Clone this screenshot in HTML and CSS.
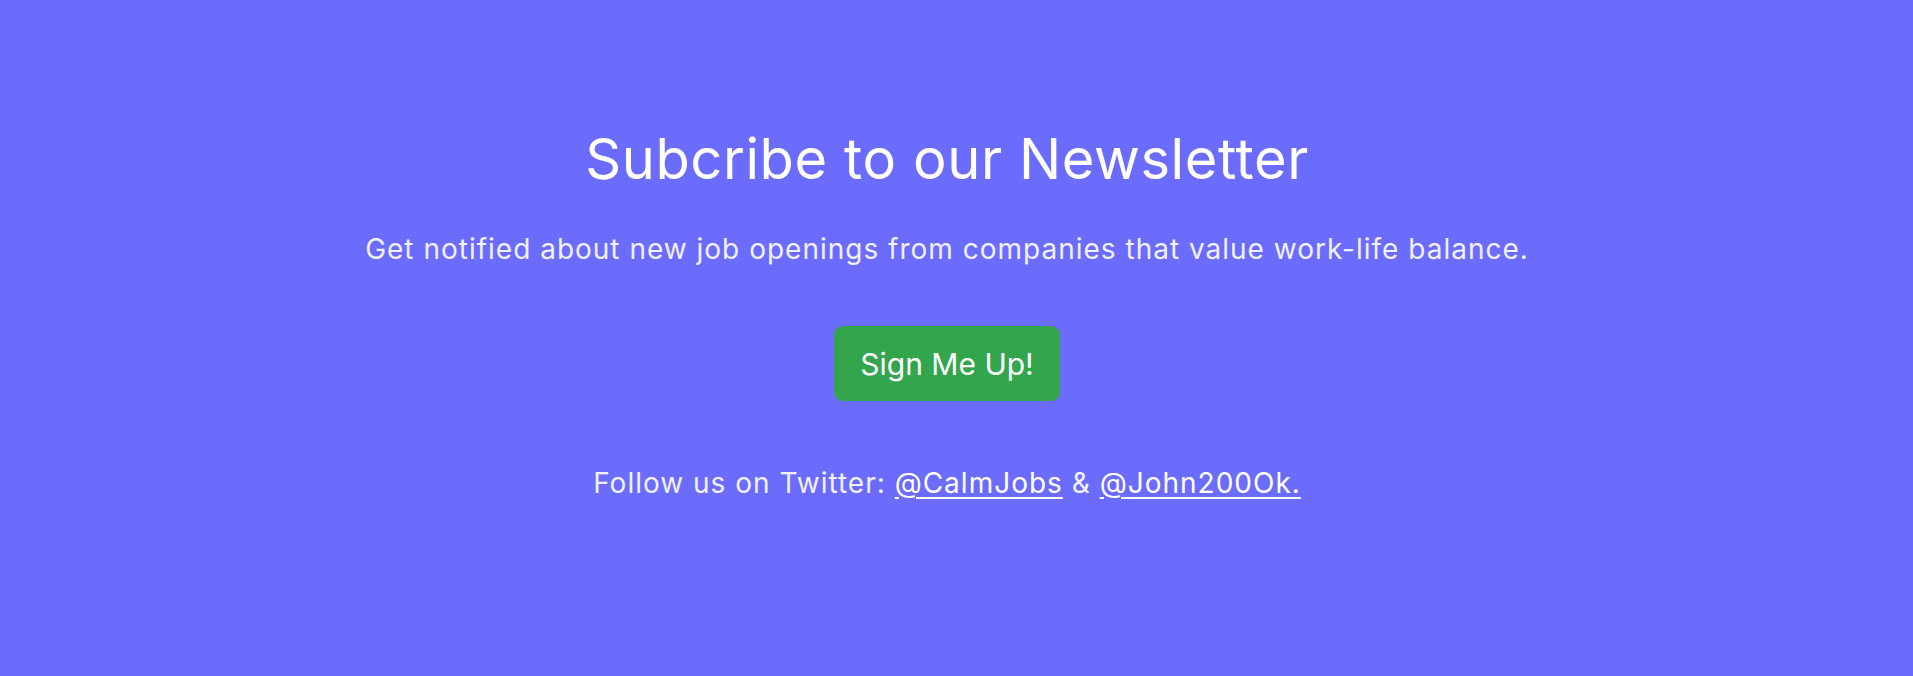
FILE: index.html
```html
<!DOCTYPE html>
<html lang="en">

<head>
    <meta charset="UTF-8">
    <meta name="viewport" content="width=device-width, initial-scale=1.0">
    <title>Newsletter</title>
    <link rel="stylesheet" href="styles.css">
</head>

<body>
    <section class="newsletter">
        <h1 class="newsletter-title">Subcribe to our Newsletter</h1>
        <p class="newsletter-text">Get notified about new job openings from companies that value work-life balance.</p>
        <a class="signup" href="#">Sign Me Up!</a>
        <p class="follow">Follow us on Twitter: <a href="#">@CalmJobs</a> &amp; <a href="#">@John200Ok.</a></p>
    </section>
</body>

</html>
```

FILE: styles.css
```css
* {
    box-sizing: border-box;
}

body {
    margin: 0;
    padding: 0;
    background-color: #6c6cfc;
    font-family: Inter, "Open Sans", sans-serif;
    color: #fff;
}

/* 訂閱區塊 */
.newsletter {
    min-height: 676px;
    padding: 125px 19px 0 0;
    display: flex;
    flex-direction: column;
    align-items: center;
    text-align: center;
}

.newsletter-title {
    margin: 0;
    font-size: 56px;
    font-weight: 400;
    line-height: 68px;
    letter-spacing: 0.6px;
}

.newsletter-text {
    margin: 35px 0 0;
    font-size: 28px;
    line-height: 42px;
    letter-spacing: 1px;
    color: #f1f1ff;
}

/* 按鈕 */
.signup {
    margin-top: 56px;
    width: 226px;
    height: 75px;
    display: flex;
    align-items: center;
    justify-content: center;
    background-color: #33a54d;
    border-radius: 9px;
    color: #fff;
    font-size: 30px;
    text-decoration: none;
}

.follow {
    margin: 61px 0 0;
    font-size: 28px;
    line-height: 42px;
    letter-spacing: 1px;
    color: #f1f1ff;
}

.follow a {
    color: #fff;
    text-decoration-thickness: 2px;
    text-underline-offset: 4px;
}
```
